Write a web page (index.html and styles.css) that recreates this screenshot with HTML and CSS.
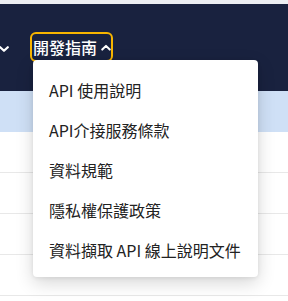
FILE: index.html
```html
<!DOCTYPE html>
<html lang="zh-Hant">
<head>
<meta charset="utf-8">
<link rel="stylesheet" href="styles.css">
</head>
<body>
<div class="topstrip"></div>
<header class="navbar">
  <div class="nav-item nav-prev">
    <svg class="chev" width="10" height="8" viewBox="0 0 10 8"><path d="M1.2 2.2 L5 5.8 L8.8 2.2" fill="none" stroke="#fff" stroke-width="2.2" stroke-linecap="round" stroke-linejoin="round"/></svg>
  </div>
  <div class="nav-item nav-open">
    <span class="nav-label">開發指南</span>
    <svg class="chev" width="12" height="9" viewBox="0 0 12 9"><path d="M1.5 7 L6 2.5 L10.5 7" fill="none" stroke="#fff" stroke-width="2.4" stroke-linecap="round" stroke-linejoin="round"/></svg>
  </div>
</header>
<main class="table">
  <div class="row row-head"></div>
  <div class="row"></div>
  <div class="row"></div>
  <div class="row"></div>
  <div class="row"></div>
</main>
<ul class="menu">
  <li class="menu-item">API 使用說明</li>
  <li class="menu-item">API介接服務條款</li>
  <li class="menu-item">資料規範</li>
  <li class="menu-item">隱私權保護政策</li>
  <li class="menu-item">資料擷取 API 線上說明文件</li>
</ul>
</body>
</html>
```
FILE: styles.css
```css
html, body {
  margin: 0;
  padding: 0;
  background: #ffffff;
  font-family: "Noto Sans CJK TC", "Noto Sans", sans-serif;
  overflow: hidden;
}
.topstrip {
  height: 4px;
  background: #eceef2;
}
.navbar {
  height: 87px;
  background: #19223f;
  display: flex;
  align-items: flex-start;
  padding-top: 28px;
  box-sizing: border-box;
  gap: 21px;
}
.nav-item {
  display: flex;
  align-items: center;
  color: #fff;
  flex-shrink: 0;
}
.nav-prev {
  height: 30px;
  margin-left: -1px;
  padding-top: 4px;
  box-sizing: border-box;
}
.nav-open {
  width: 83px;
  height: 30px;
  box-sizing: border-box;
  border: 2px solid #f7b500;
  border-radius: 6px;
  padding: 0 0 0 1px;
  gap: 4px;
}
.nav-label {
  font-size: 16px;
  font-weight: 500;
  line-height: 20px;
  white-space: nowrap;
}
.table {
  display: flex;
  flex-direction: column;
}
.row {
  height: 41px;
  border-bottom: 1px solid #e8e8e8;
  box-sizing: border-box;
}
.row-head {
  background: #cfe0f6;
  border-bottom: none;
}
.menu {
  position: absolute;
  left: 33px;
  top: 60px;
  width: 225px;
  margin: 0;
  padding: 10px 0 7px;
  list-style: none;
  background: #fff;
  border-radius: 4px;
  box-shadow: 0 6px 18px rgba(0, 0, 0, 0.16), 0 1px 4px rgba(0, 0, 0, 0.08);
}
.menu-item {
  height: 40px;
  display: flex;
  align-items: center;
  padding-left: 16px;
  font-size: 16px;
  color: #222;
  white-space: nowrap;
}
```
